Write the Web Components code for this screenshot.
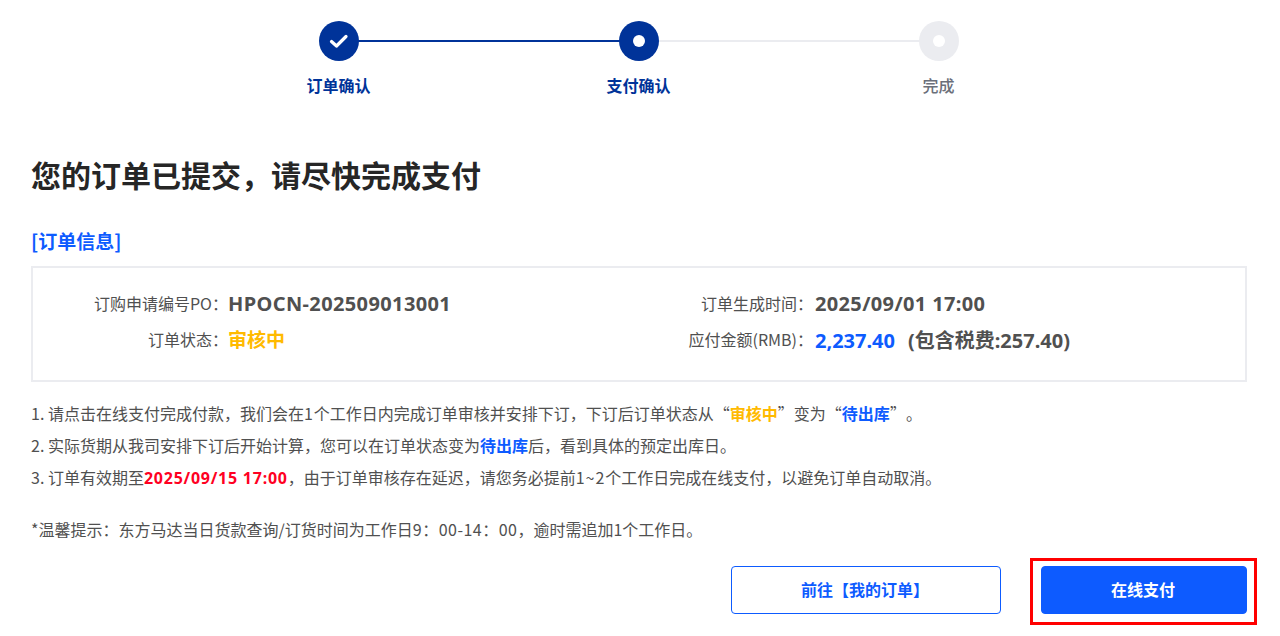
<!DOCTYPE html>
<html lang="zh-CN">
<head>
<meta charset="utf-8">
<title>支付确认</title>
<style>
  html, body { margin: 0; padding: 0; background: #fff; }
  body { font-family: "Noto Sans CJK SC", "Noto Sans", sans-serif; color: #505050; height: 636px; overflow: hidden; text-spacing-trim: space-all; }
</style>
</head>
<body>
<order-page>
  <order-steps></order-steps>
  <h1>您的订单已提交，请尽快完成支付</h1>
  <order-info></order-info>
  <order-notes></order-notes>
  <order-actions></order-actions>
</order-page>

<script>
class OrderPage extends HTMLElement {
  constructor() {
    super();
    this.attachShadow({ mode: 'open' });
    this.shadowRoot.innerHTML = `
      <style>
        :host { display: block; padding: 0 33px 0 31px; }
        ::slotted(h1) {
          margin: 55px 0 0;
          font-size: 30px;
          line-height: 44px;
          font-weight: 700;
          color: #262626;
        }
      </style>
      <slot></slot>
    `;
  }
}

class OrderSteps extends HTMLElement {
  constructor() {
    super();
    this.attachShadow({ mode: 'open' });
    this.shadowRoot.innerHTML = `
      <style>
        :host { display: flex; justify-content: center; padding-top: 21px; margin-left: -1px; }
        .step { width: 300px; display: flex; flex-direction: column; align-items: center; position: relative; }
        .dot { width: 40px; height: 40px; border-radius: 50%; background: #003399; display: flex; align-items: center; justify-content: center; position: relative; z-index: 1; }
        .dot i { width: 12px; height: 12px; border-radius: 50%; background: #fff; }
        .todo .dot { background: #ebecf0; }
        .line { position: absolute; top: 19px; left: 150px; width: 300px; height: 2px; background: #003399; }
        .line.off { background: #ebecf0; }
        .label { margin-top: 12px; font-size: 16px; line-height: 24px; font-weight: 700; color: #003399; }
        .todo .label { color: #6b6f7a; font-weight: 500; }
      </style>
      <div class="step">
        <div class="line"></div>
        <div class="dot">
          <svg width="20" height="20" viewBox="0 0 20 20" fill="none"><path d="M2.5 10.5 L7.5 15 L17 5.5" stroke="#fff" stroke-width="3.2" stroke-linecap="round" stroke-linejoin="round"/></svg>
        </div>
        <div class="label">订单确认</div>
      </div>
      <div class="step">
        <div class="line off"></div>
        <div class="dot"><i></i></div>
        <div class="label">支付确认</div>
      </div>
      <div class="step todo">
        <div class="dot"><i></i></div>
        <div class="label">完成</div>
      </div>
    `;
  }
}

class OrderInfo extends HTMLElement {
  constructor() {
    super();
    this.attachShadow({ mode: 'open' });
    this.shadowRoot.innerHTML = `
      <style>
        :host { display: block; margin-top: 30px; text-spacing-trim: space-all; }
        h2 { margin: 0 0 10px; font-size: 19px; line-height: 30px; font-weight: 700; color: #0d5bff; }
        .card {
          border: 2px solid #ebecf0;
          height: 106px;
          padding-bottom: 6px;
          display: grid;
          grid-template-columns: 608px 1fr;
          grid-auto-rows: 36px;
          align-content: center;
        }
        .row { display: grid; align-items: center; }
        .a { grid-template-columns: 195px 1fr; }
        .b { grid-template-columns: 172px 1fr; }
        .k { text-align: right; font-size: 16px; color: #505050; white-space: nowrap; }
        .v { font-family: "Noto Sans", "Noto Sans CJK SC", sans-serif; font-size: 20px; font-weight: 700; color: #505050; white-space: nowrap; }
        .a .v { letter-spacing: .38px; }
        .b .v { padding-left: 2px; }
        .b .date { letter-spacing: .35px; }
        .a .wait { color: #ffba00; font-size: 19px; letter-spacing: 0; }
        .money { color: #0d5bff; margin-right: 13px; }
      </style>
      <h2>[订单信息]</h2>
      <div class="card">
        <div class="row a"><span class="k">订购申请编号PO：</span><span class="v">HPOCN-202509013001</span></div>
        <div class="row b"><span class="k">订单生成时间：</span><span class="v date">2025/09/01 17:00</span></div>
        <div class="row a"><span class="k">订单状态：</span><span class="v wait">审核中</span></div>
        <div class="row b"><span class="k">应付金额(RMB)：</span><span class="v"><span class="money">2,237.40</span>(包含税费:257.40)</span></div>
      </div>
    `;
  }
}

class OrderNotes extends HTMLElement {
  constructor() {
    super();
    this.attachShadow({ mode: 'open' });
    this.shadowRoot.innerHTML = `
      <style>
        :host { display: block; margin-top: 15px; font-size: 16px; line-height: 32px; color: #505050; white-space: nowrap; text-spacing-trim: space-all; }
        b { font-weight: 700; }
        .y { color: #ffba00; }
        .bl { color: #0d5bff; }
        .r { color: #ff0022; font-family: "Noto Sans", sans-serif; letter-spacing: .75px; }
        .n { letter-spacing: 1px; }
        .t { letter-spacing: .5px; }
        .tip { margin-top: 19px; }
      </style>
      <div>1. 请点击在线支付完成付款，我们会在<span class="n">1</span>个工作日内完成订单审核并安排下订，下订后订单状态从“<b class="y">审核中</b>”变为“<b class="bl">待出库</b>”。</div>
      <div>2. 实际货期从我司安排下订后开始计算，您可以在订单状态变为<b class="bl">待出库</b>后，看到具体的预定出库日。</div>
      <div>3. 订单有效期至<b class="r">2025/09/15 17:00</b>，由于订单审核存在延迟，请您务必提前<span class="n">1~2</span>个工作日完成在线支付，以避免订单自动取消。</div>
      <div class="tip">*温馨提示：东方马达当日货款查询/订货时间为工作日<span class="t">9：00-14：00</span>，逾时需追加1个工作日。</div>
    `;
  }
}

class OrderActions extends HTMLElement {
  constructor() {
    super();
    this.attachShadow({ mode: 'open' });
    this.shadowRoot.innerHTML = `
      <style>
        :host { display: flex; justify-content: flex-end; gap: 40px; margin-top: 21px; }
        button {
          height: 48px;
          border-radius: 4px;
          font: 700 16px "Noto Sans CJK SC", "Noto Sans", sans-serif;
          border: 1px solid #0d5bff;
          box-sizing: border-box;
          padding: 0 2px 2px 0;
          text-spacing-trim: space-all;
        }
        .ghost { width: 270px; background: #fff; color: #0d5bff; }
        .pay { width: 206px; background: #0d5bff; color: #fff; }
        .wrap { position: relative; display: flex; }
        /* red annotation frame over the pay button */
        .mark { position: absolute; inset: -8px -10px -11px -11px; border: 3px solid #ff0000; pointer-events: none; }
      </style>
      <button class="ghost">前往【我的订单】</button>
      <div class="wrap"><button class="pay">在线支付</button><div class="mark"></div></div>
    `;
  }
}

customElements.define('order-page', OrderPage);
customElements.define('order-steps', OrderSteps);
customElements.define('order-info', OrderInfo);
customElements.define('order-notes', OrderNotes);
customElements.define('order-actions', OrderActions);
</script>
</body>
</html>
